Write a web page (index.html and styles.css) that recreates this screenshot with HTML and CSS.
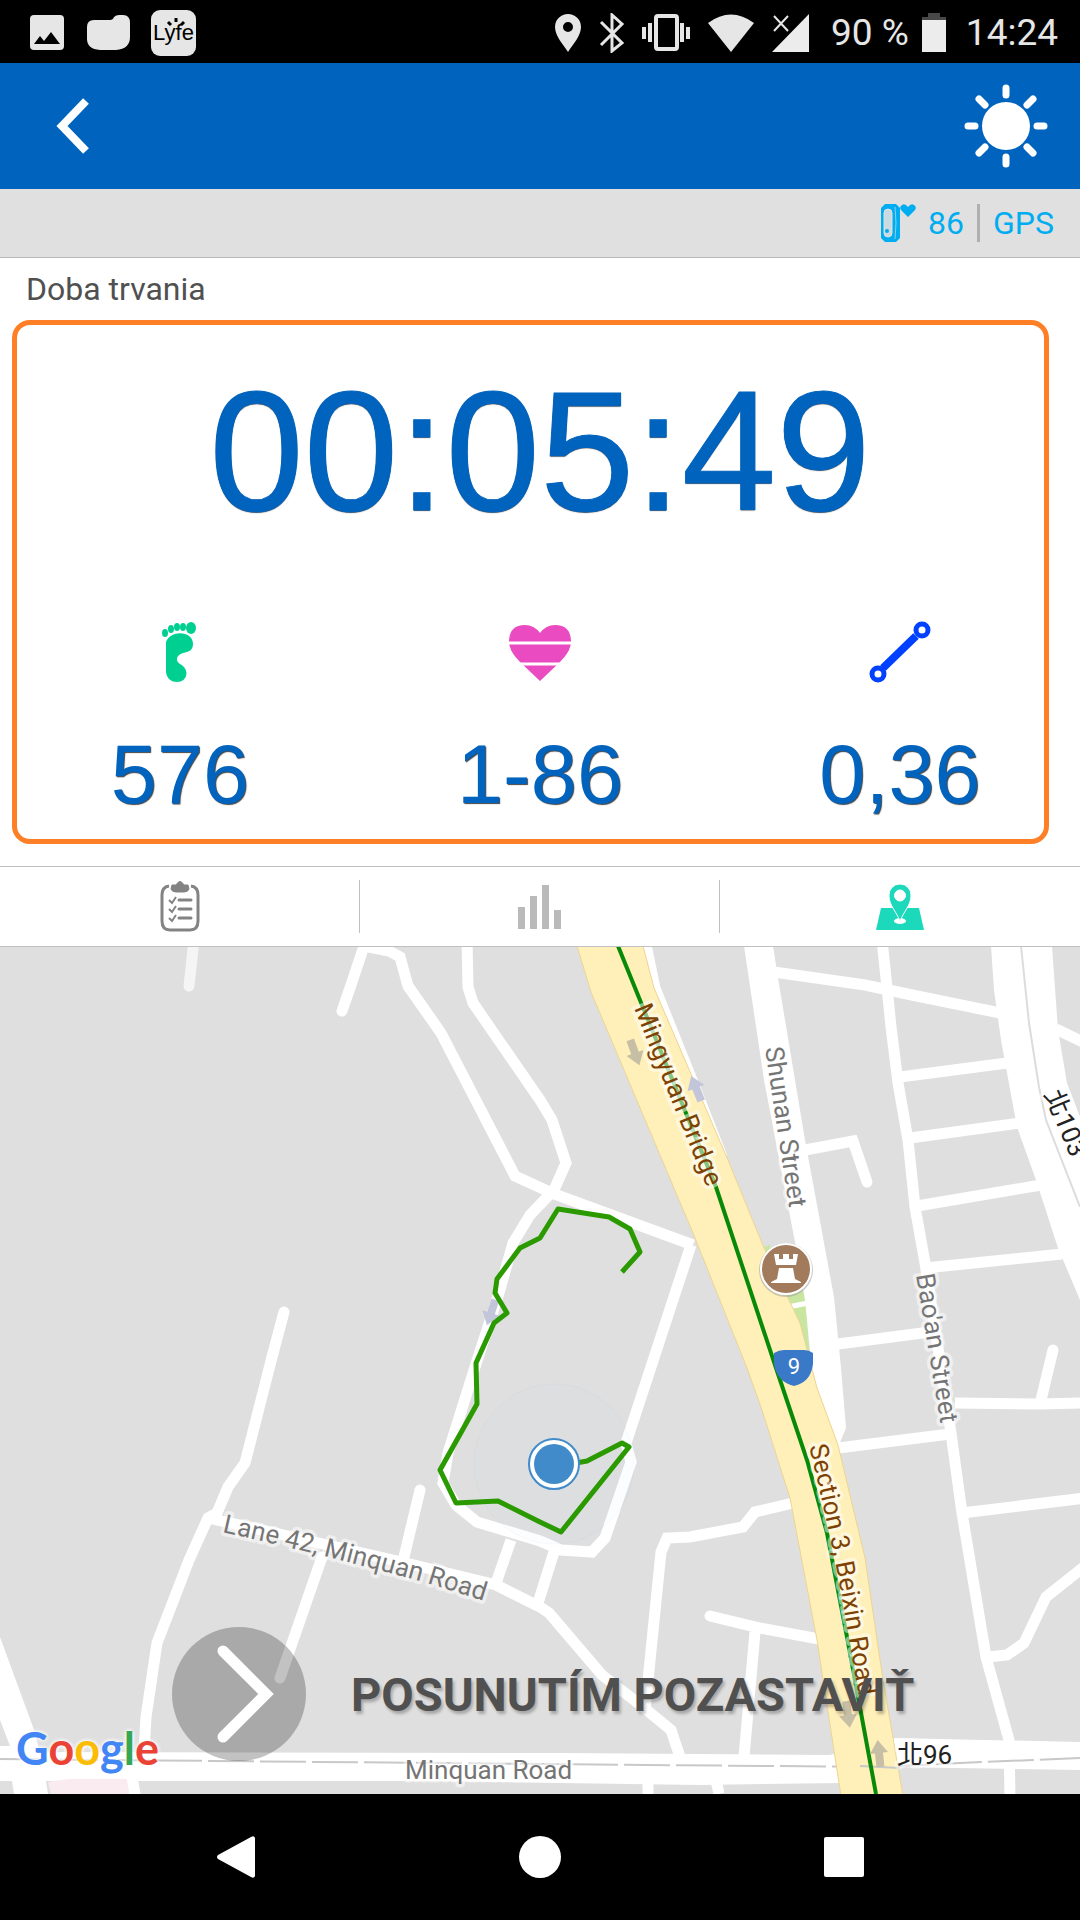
FILE: index.html
```
<!DOCTYPE html>
<html lang="sk">
<head>
    <meta charset="UTF-8">
    <meta name="viewport" content="width=device-width, initial-scale=1.0">
    <title>Doba trvania</title>
    <link rel="stylesheet" href="styles.css">
</head>
<body>
    <div class="status-bar">
        <div class="status-left">
            <svg width="36" height="36" viewBox="0 0 36 36"><rect x="1" y="0" width="34" height="35" rx="4" fill="#e6e6e6"/><path d="M5 29 L11 21 L15 26 L22 17 L31 29 Z" fill="#000"/></svg>
            <svg width="44" height="36" viewBox="0 0 44 36"><path d="M8 5 H24 Q27 5 28 2 Q30 0 33 0 H37 Q44 0 44 8 V22 Q44 34 30 35 H14 Q1 34 1 24 V12 Q1 5 8 5 Z" fill="#e6e6e6"/></svg>
            <span class="app-badge">Lyfe
                <svg width="20" height="9" viewBox="0 0 20 9"><path d="M2 4 L5 7 M10 0 V4 M18 4 L15 7" stroke="#000" stroke-width="3" fill="none"/></svg>
            </span>
        </div>
        <div class="status-right">
            <svg width="28" height="40" viewBox="0 0 28 40"><path fill-rule="evenodd" d="M14 1 A13 13 0 0 0 1 14 C1 23 9 31 14 39 C19 31 27 23 27 14 A13 13 0 0 0 14 1 Z M14 9 A5 5 0 1 1 14 19 A5 5 0 1 1 14 9 Z" fill="#e6e6e6"/></svg>
            <svg width="26" height="40" viewBox="0 0 26 40"><path d="M2 9 L23 30 L13 38 V2 L23 11 L2 32" fill="none" stroke="#e6e6e6" stroke-width="3"/></svg>
            <svg width="48" height="38" viewBox="0 0 48 38"><rect x="14" y="2" width="21" height="33" rx="2" fill="none" stroke="#e6e6e6" stroke-width="4"/><path d="M2 13 V25 M8 9 V28 M40 9 V28 M46 13 V25" stroke="#e6e6e6" stroke-width="4"/></svg>
            <svg width="48" height="40" viewBox="0 0 48 40"><path d="M1 10 Q24 -7 47 10 L24 39 Z" fill="#e6e6e6"/></svg>
            <svg width="38" height="40" viewBox="0 0 38 40"><path d="M0 39 L37 1 V39 Z" fill="#ececec"/><path d="M2 3 L16 18 M16 3 L2 18" stroke="#e6e6e6" stroke-width="2"/></svg>
            <span class="battery-text">90 %</span>
            <svg width="24" height="40" viewBox="0 0 24 40"><path d="M6 0 H18 V4 H24 V8 H0 V4 H6 Z" fill="#484848"/><rect y="7" width="24" height="32" fill="#ececec"/></svg>
            <span class="clock">14:24</span>
        </div>
    </div>

    <header class="app-bar">
        <button class="icon-button" aria-label="Back">
            <svg width="36" height="60" viewBox="0 0 36 60"><path d="M32 5 L8 30 L32 55" fill="none" stroke="#fff" stroke-width="8"/></svg>
        </button>
        <button class="icon-button" aria-label="Brightness">
            <svg width="84" height="84" viewBox="0 0 84 84">
                <circle cx="42" cy="42" r="24" fill="#fff"/>
                <path d="M42 4 V11 M42 73 V80 M4 42 H11 M73 42 H80 M15 15 L21 21 M63 63 L69 69 M69 15 L63 21 M21 63 L15 69" stroke="#fff" stroke-width="7" stroke-linecap="round"/>
            </svg>
        </button>
    </header>

    <div class="sensor-bar">
        <svg width="36" height="38" viewBox="0 0 36 38">
            <path d="M4 0 H15 L19 4 V34 L15 38 H4 L0 34 V4 Z" fill="#00adf0"/>
            <rect x="3" y="5" width="8" height="28" rx="4" fill="#c9dbe2" stroke="#e0e0e0"/>
            <circle cx="6" cy="27" r="2" fill="#00adf0"/>
            <path d="M14 3 Q16 19 14 35" fill="none" stroke="#8fd0ea" stroke-width="1"/>
            <path d="M27 13 L20 6 Q18 3 21 1 Q24 -1 27 3 Q30 -1 33 1 Q36 3 34 6 Z" fill="#00adf0"/>
        </svg>
        <span class="pulse">86</span>
        <span class="gps">GPS</span>
    </div>

    <main class="workout">
        <section class="stats">
            <h1>Doba trvania</h1>
            <div class="timer">00:05:49</div>
            <div class="stat-row">
                <div class="stat">
                    <svg width="64" height="64" viewBox="0 0 64 64" fill="#00cf92">
                        <ellipse cx="17" cy="13" rx="3" ry="4"/><ellipse cx="23" cy="9" rx="3" ry="4"/><ellipse cx="29" cy="7" rx="3" ry="4"/><ellipse cx="35" cy="7" rx="3" ry="4"/><ellipse cx="43" cy="8" rx="5" ry="6"/>
                        <path d="M18 22 C22 10 45 10 45 24 C45 30 41 32 35 33 C28 35 27 41 32 44 C42 49 40 62 29 62 C22 62 18 57 18 51 Z"/>
                    </svg>
                    <span class="value">576</span>
                </div>
                <div class="stat">
                    <svg width="64" height="64" viewBox="0 0 64 64">
                        <path d="M32 61 L12 42 Q0 30 1 20 Q2 5 17 5 Q26 5 32 13 Q38 5 47 5 Q62 5 63 20 Q64 30 52 42 Z" fill="#ea4bc0"/>
                        <path d="M0 23 H64 M0 44 H64" stroke="#fff" stroke-width="3"/>
                    </svg>
                    <span class="value">1-86</span>
                </div>
                <div class="stat">
                    <svg width="64" height="64" viewBox="0 0 64 64" fill="none" stroke="#0040ff">
                        <path d="M15 48 L48 16" stroke-width="8"/>
                        <circle cx="54" cy="10" r="6" stroke-width="5"/><circle cx="10" cy="54" r="6" stroke-width="5"/>
                    </svg>
                    <span class="value">0,36</span>
                </div>
            </div>
        </section>

        <nav class="tabs">
            <button class="tab" aria-label="Summary">
                <svg width="40" height="52" viewBox="0 0 40 52" fill="none" stroke="#838383">
                    <path d="M9 5 Q2 6 2 14 V40 Q2 49 10 49 H30 Q38 49 38 40 V14 Q38 6 31 5" stroke-width="3"/>
                    <path d="M12 4 H16 Q20 -3 24 4 H28 L29 8 Q28 11 24 11 H16 Q12 11 11 8 Z" fill="#838383"/>
                    <path d="M9 19 L12 22 L16 16 M9 28 L12 31 L16 25 M9 37 L12 40 L16 34" stroke-width="2"/>
                    <path d="M19 19 H31 M19 28 H31 M19 37 H31" stroke-width="3" stroke-linecap="round"/>
                </svg>
            </button>
            <button class="tab" aria-label="Chart">
                <svg width="44" height="46" viewBox="0 0 44 46" fill="#bababa"><path d="M0 23 H7 V45 H0 Z M12 12 H19 V45 H12 Z M24 1 H31 V45 H24 Z M36 26 H43 V45 H36 Z"/></svg>
            </button>
            <button class="tab" aria-label="Map">
                <svg width="48" height="48" viewBox="0 0 48 48">
                    <path d="M5 25 H43 L48 47 H0 Z" fill="#1bd9ba"/>
                    <ellipse cx="24" cy="38" rx="6" ry="3" fill="#fff"/>
                    <path fill-rule="evenodd" d="M24 1 A11 11 0 0 0 13 13 C13 22 20 28 24 38 C28 28 35 22 35 13 A11 11 0 0 0 24 1 Z M24 7 A5 5 0 1 1 24 18 A5 5 0 1 1 24 7 Z" fill="#1bd9ba" stroke="#fff" stroke-width="1"/>
                </svg>
            </button>
        </nav>

        <section class="map">
            <svg class="map-canvas" viewBox="0 947 1080 847" preserveAspectRatio="xMidYMid slice">
                <defs>
                    <path id="mingyuan" d="M634 1008 L682 1127 L712 1200"/>
                    <path id="shunan" d="M765 1048 L800 1280"/>
                    <path id="baoan" d="M916 1275 L945 1450"/>
                    <path id="section" d="M809 1446 Q832 1540 844 1610 T870 1760"/>
                    <path id="lane" d="M222 1532 Q330 1556 430 1584 L520 1612"/>
                    <path id="bei" d="M1044 1094 L1084 1190"/>
                    <path id="arrow" d="M-4 -14 H4 V0 H9 L0 13 L-9 0 H-4 Z"/>
                </defs>

                <path class="park" d="M764 1247 L770 1245 L770 1260 Z M786 1296 L805 1290 L810 1365 Z"/>
                <path d="M788 1307 L808 1303" stroke="#fff" stroke-width="5"/>

                <!-- wide streets -->
                <g class="area">
                    <path d="M744 946 L773 946 L778 978 L805 1140 L834 1297 L841 1368 L846 1428 L839 1445 L812 1440 L810 1350 L805 1300 L795 1242 L764 1080 Z"/>
                    <path d="M991 946 L1052 946 L1058 1030 L1067 1083 L1080 1117 V1300 L1058 1248 L1036 1180 L1017 1127 L1001 1040 L994 990 Z"/>
                    <path d="M0 1637 L33 1727 L40 1752 L560 1753 L830 1755 L895 1738 L1080 1742 V1770 L890 1767 L841 1783 L700 1785 L430 1781 H46 L48 1794 H14 L12 1781 H0 Z"/>
                </g>
                <path class="grass" d="M0 1720 L10 1746 H0 Z"/>
                <path class="pink" d="M48 1782 L68 1779 H129 L132 1794 H51 Z"/>
                <path class="median" d="M1021 946 L1029 1023 L1039 1087 L1046 1120 L1080 1207"/>

                <g class="roads">
                    <path class="faint" d="M194 940 L189 986"/>
                    <path class="stub" d="M366 940 L351 985 L342 1011"/>
                    <path d="M364 946 L389 951 L400 957 L408 986 L441 1033 L515 1176 L554 1194 L693 1245"/>
                    <path d="M467 940 L468 987 L473 1003 L540 1100 L552 1120 L566 1163 L554 1190 L530 1215 L513 1243 L499 1293 L475 1367 L448 1453 L443 1483 L456 1505 L477 1522 L540 1541 L561 1550 L592 1552 L605 1538 L631 1462 L626 1443 L650 1370 L691 1245"/>
                    <path class="stub" d="M284 1312 L272 1357 L245 1463 L228 1487 L217 1513 L208 1518 L189 1560 L157 1643 L146 1717 L144 1753 M129 1760 L136 1800"/>
                    <path d="M208 1518 L262 1530 L406 1563 L496 1585 L540 1607 L549 1613 L602 1675 L643 1707 L671 1730 L680 1757"/>
                    <path class="stub" d="M420 1490 L404 1557 M322 1557 L280 1678"/>
                    <path d="M511 1540 L496 1583 M554 1552 L538 1603"/>
                    <path d="M793 1503 L755 1512 L743 1527 L690 1537 L667 1538 L661 1552 L645 1710"/>
                    <path class="stub" d="M710 1616 L760 1628 L819 1639"/>
                    <path d="M755 1632 L744 1757 M648 1780 V1794 M716 1780 L719 1794"/>
                    <path d="M774 972 L865 985 L912 995 L1000 1013 M1056 1029 L1085 1043"/>
                    <path d="M882 940 L888 997 L891 1027 L898 1083 L908 1140 L915 1207 L925 1263 L951 1433 L962 1513 L986 1657 L1009 1740 L1010 1800"/>
                    <path d="M900 1077 L1007 1063 M910 1138 L1020 1123 M917 1206 L1041 1185 M925 1268 L1062 1254"/>
                    <path class="stub" d="M805 1150 L853 1141 L867 1182"/>
                    <path d="M838 1344 L930 1332 M838 1448 L950 1434 M955 1403 L1039 1404 L1085 1403 M962 1513 L1085 1498"/>
                    <path class="stub" d="M1053 1350 L1041 1400"/>
                    <path d="M988 1657 L1007 1655 L1024 1643 L1046 1597 L1085 1566"/>
                    <path d="M645 940 L655 988 L692 1080 L722 1157"/>
                </g>

                <path class="centerline" d="M0 1759 L540 1764 L880 1767 L960 1763 L1080 1758"/>

                <path class="highway" d="M577 946 L591 992 L693 1233 L747 1368 L762 1410 L790 1498 L817 1640 L841 1796 L903 1796 L883 1680 L865 1558 L838 1445 L817 1388 L800 1323 L764 1248 L728 1160 L654 988 L643 946 Z"/>
                <path class="centerline" d="M860 1766 L900 1768"/>
                <path class="line" d="M618 946 L716 1187 L776 1368 L807 1460 L827 1533 L847 1637 L876 1794"/>

                <use href="#arrow" class="arrow" transform="translate(635 1053) rotate(-20)"/>
                <use href="#arrow" class="arrow blue" transform="translate(696 1088) rotate(158)"/>
                <use href="#arrow" class="arrow blue" transform="translate(491 1313) rotate(18)"/>
                <use href="#arrow" class="arrow" transform="translate(848 1715) rotate(-8)"/>
                <use href="#arrow" class="arrow" transform="translate(879 1753) rotate(174)"/>

                <text class="label highway-label"><textPath href="#mingyuan">Mingyuan Bridge</textPath></text>
                <text class="label highway-label"><textPath href="#section">Section 3, Beixin Road</textPath></text>
                <text class="label"><textPath href="#shunan">Shunan Street</textPath></text>
                <text class="label"><textPath href="#baoan">Bao'an Street</textPath></text>
                <text class="label"><textPath href="#lane">Lane 42, Minquan Road</textPath></text>
                <text class="label" x="405" y="1779">Minquan Road</text>
                <text class="label dark" x="897" y="1764">北96</text>
                <text class="label dark"><textPath href="#bei">北103</textPath></text>

                <!-- castle pin -->
                <circle cx="786" cy="1270" r="27" fill="#999" opacity=".5"/>
                <circle cx="786" cy="1269" r="25" fill="#a27a5c" stroke="#fff" stroke-width="2"/>
                <path d="M774 1254 H779 V1259 H783 V1254 H789 V1259 H793 V1254 H798 L796 1265 H776 Z M779 1268 H793 L795 1279 L801 1282 V1283 H771 V1282 L777 1279 Z" fill="#fff"/>

                <path d="M774 1353 Q779 1350 784 1350 H804 Q809 1350 813 1353 V1364 Q811 1382 794 1386 Q777 1382 774 1364 Z" fill="#3a78c8"/>
                <text class="route-number" x="794" y="1374">9</text>

                <circle class="accuracy" cx="554" cy="1464" r="80"/>
                <path class="track" d="M622 1272 L640 1252 L630 1229 L609 1217 L558 1209 L540 1238 L520 1248 L497 1279 L495 1293 L507 1313 L494 1323 L476 1363 L477 1404 L440 1470 L456 1503 L498 1501 L540 1522 L561 1532 L629 1447 L622 1443 L587 1461 L576 1463"/>
                <circle cx="554" cy="1464" r="25" fill="#fff" stroke="#428bca" stroke-width="2"/>
                <circle cx="554" cy="1464" r="20" fill="#428bca"/>
            </svg>

            <div class="google-logo"><span class="b">G</span><span class="r">o</span><span class="y">o</span><span class="b">g</span><span class="g">l</span><span class="r">e</span></div>

            <button class="slide-button">
                <svg width="134" height="134" viewBox="0 0 134 134">
                    <circle cx="67" cy="67" r="67" fill="rgba(0, 0, 0, .24)"/>
                    <path d="M51 24 L94 67 L51 110" fill="none" stroke="#fff" stroke-width="11" stroke-linecap="round"/>
                </svg>
                <span>POSUNUTÍM POZASTAVIŤ</span>
            </button>
        </section>
    </main>

    <nav class="nav-bar">
        <button aria-label="Back"><svg width="44" height="44" viewBox="0 0 44 44"><path d="M4 20 L37 2 Q40 0 41 3 V41 Q40 44 37 42 L4 24 Q2 22 4 20 Z" fill="#fff"/></svg></button>
        <button aria-label="Home"><svg width="44" height="44" viewBox="0 0 44 44"><circle cx="22" cy="22" r="21" fill="#fff"/></svg></button>
        <button aria-label="Recent apps"><svg width="44" height="44" viewBox="0 0 44 44"><rect x="2" y="2" width="40" height="40" rx="2" fill="#fff"/></svg></button>
    </nav>
</body>
</html>
```
FILE: styles.css
```
* {
    box-sizing: border-box;
}
body {
    margin: 0;
    min-height: 100vh;
    display: flex;
    flex-direction: column;
    font-family: Roboto, "Noto Sans CJK TC", sans-serif;
    background-color: #fff;
    color: #505050;
}
button {
    margin: 0;
    padding: 0;
    border: none;
    background: none;
    font-family: inherit;
    cursor: pointer;
}
svg {
    display: block;
}
.status-bar {
    height: 63px;
    padding: 2px 22px 0 29px;
    display: flex;
    justify-content: space-between;
    align-items: center;
    background-color: #000;
    color: #e6e6e6;
    font-size: 37px;
}
.status-left, .status-right {
    display: flex;
    align-items: center;
}
.status-left {
    gap: 21px;
}
.status-right {
    gap: 17px;
}
.battery-text {
    margin: 0 -4px 0 4px;
}
.clock {
    margin-left: 3px;
}
.app-badge {
    position: relative;
    width: 45px;
    height: 46px;
    border-radius: 9px;
    background-color: #e6e6e6;
    color: #000;
    font: 22px/46px "Liberation Sans", sans-serif;
    text-align: center;
}
.app-badge svg {
    position: absolute;
    top: 8px;
    left: 15px;
}
.app-bar {
    height: 126px;
    padding: 0 32px 0 54px;
    display: flex;
    justify-content: space-between;
    align-items: center;
    background-color: #0063be;
}
.sensor-bar {
    height: 69px;
    padding-right: 26px;
    display: flex;
    justify-content: flex-end;
    align-items: center;
    background-color: #e0e0e0;
    border-bottom: 1px solid #b8b8b8;
    color: #00adf0;
    font-size: 32px;
    line-height: 38px;
}
.pulse {
    padding: 0 13px 0 11px;
    border-right: 3px solid #b0b0b0;
}
.gps {
    padding-left: 13px;
}
.workout {
    flex: 1;
    display: flex;
    flex-direction: column;
}
.stats {
    position: relative;
    height: 608px;
    padding-top: 12px;
}
/* orange frame round the live values */
.stats::after {
    content: "";
    position: absolute;
    top: 62px;
    right: 31px;
    bottom: 22px;
    left: 12px;
    border: 5px solid #ff7f27;
    border-radius: 18px;
}
.stats h1 {
    margin: 0;
    padding-left: 26px;
    font-size: 32px;
    font-weight: 400;
    line-height: 38px;
}
.timer {
    margin-top: 45px;
    color: #0063be;
    font: 170px/196px "Liberation Sans", sans-serif;
    text-align: center;
    text-shadow: 0 1px 1px #555;
    -webkit-text-stroke: 1px #0063be;
}
.stat-row {
    margin-top: 71px;
    display: grid;
    grid-template-columns: repeat(3, 1fr);
}
.stat {
    display: flex;
    flex-direction: column;
    align-items: center;
    gap: 43px;
}
.value {
    color: #0063be;
    font: 83px/96px "Liberation Sans", sans-serif;
    text-shadow: 1px 1px 1px #444;
}
.tabs {
    height: 81px;
    padding: 13px 0;
    display: grid;
    grid-template-columns: repeat(3, 1fr);
    border-top: 1px solid #c0c0c0;
    border-bottom: 1px solid #c0c0c0;
}
.tab {
    display: flex;
    justify-content: center;
    align-items: center;
    border-right: 1px solid #c0c0c0;
}
.tab:last-child {
    border-right: none;
}
.map {
    flex: 1;
    position: relative;
    min-height: 600px;
    overflow: hidden;
    background-color: #dfdfdf;
}
.map-canvas {
    position: absolute;
    top: 0;
    left: 0;
    width: 100%;
    height: 100%;
}
.area {
    fill: #fff;
}
.grass {
    fill: #dfdfdf;
}
.park {
    fill: #c8e6a0;
}
.pink {
    fill: #f9ebef;
}
.roads {
    fill: none;
    stroke: #fff;
    stroke-width: 11px;
}
.roads .stub {
    stroke-linecap: round;
}
.roads .faint {
    stroke: #f5f5f5;
    stroke-linecap: round;
}
.median {
    fill: none;
    stroke: #dcdcdc;
    stroke-width: 2px;
}
.centerline {
    fill: none;
    stroke: #c8c8c8;
    stroke-width: 2px;
    stroke-dasharray: 46px 6px;
}
.highway {
    fill: #ffefb9;
    stroke: #ecd592;
    stroke-width: 1px;
}
.line {
    fill: none;
    stroke: #088a08;
    stroke-width: 4px;
}
.track {
    fill: none;
    stroke: #2a9a00;
    stroke-width: 5px;
    stroke-linejoin: round;
}
.accuracy {
    fill: rgba(190, 215, 240, .06);
    stroke: rgba(66, 139, 202, .04);
}
.arrow {
    fill: #c6bfa5;
}
.arrow.blue {
    fill: #c3c6da;
}
.label {
    fill: #757575;
    stroke: rgba(255, 255, 255, .5);
    stroke-width: 7px;
    stroke-linejoin: round;
    paint-order: stroke;
    font-size: 26px;
}
.highway-label {
    fill: #7d4104;
}
.dark {
    fill: #222;
}
.route-number {
    fill: #fff;
    font-size: 22px;
    text-anchor: middle;
}
.google-logo {
    position: absolute;
    left: 16px;
    bottom: 18px;
    font: 700 45px/56px Lato, sans-serif;
    text-shadow: 0 0 4px #fff, 0 0 4px #fff;
}
.google-logo .b {
    color: #4285f4;
}
.google-logo .r {
    color: #ea4335;
}
.google-logo .y {
    color: #fbbc05;
}
.google-logo .g {
    color: #34a853;
}
.slide-button {
    position: absolute;
    left: 172px;
    bottom: 33px;
    display: flex;
    align-items: center;
    gap: 45px;
    color: #505050;
    font-size: 47px;
    font-weight: 700;
    white-space: nowrap;
    text-shadow: 2px 3px 3px rgba(0, 0, 0, .25);
}
.nav-bar {
    height: 126px;
    padding: 0 214px;
    display: flex;
    justify-content: space-between;
    align-items: center;
    background-color: #000;
}
```
